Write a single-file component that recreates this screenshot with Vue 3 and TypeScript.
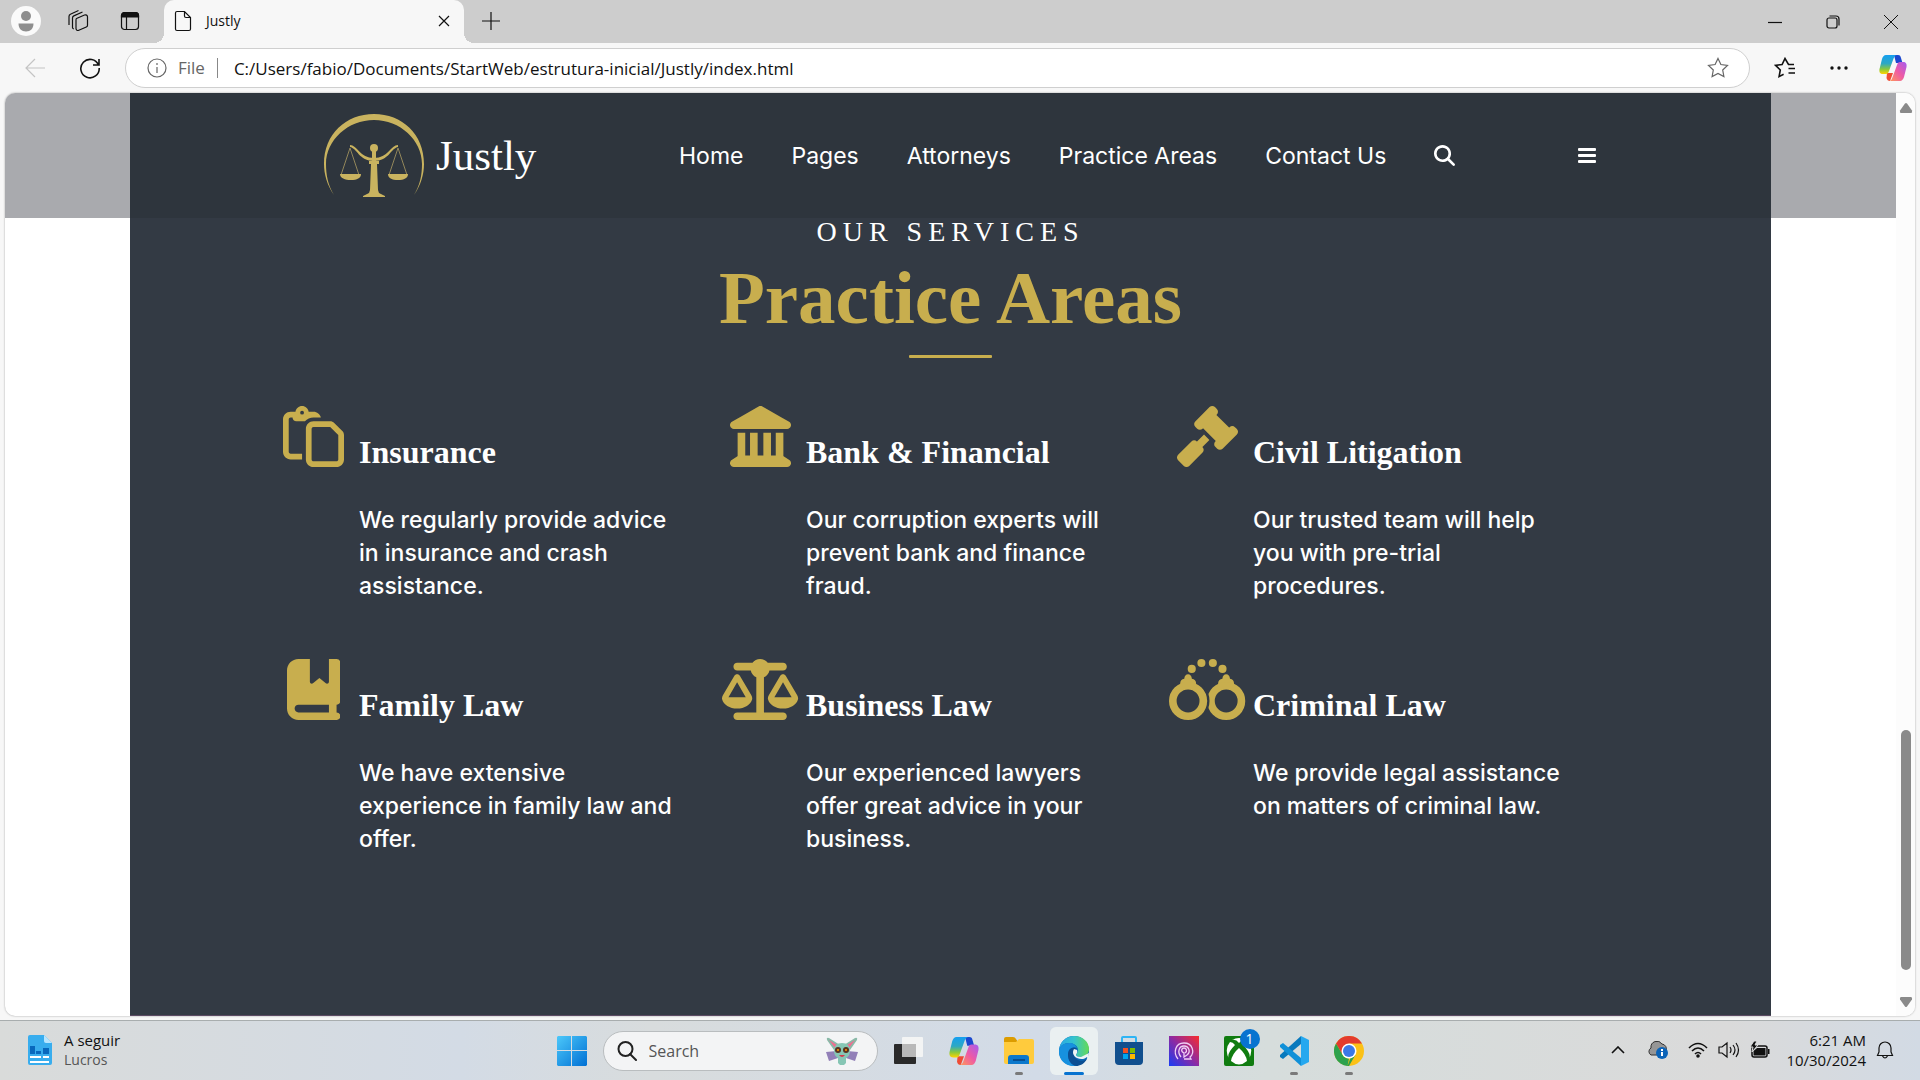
<script setup lang="ts">
import { ref } from 'vue'

interface Service {
  title: string
  text: string
  icon: 'paste' | 'bank' | 'gavel' | 'book' | 'scale' | 'cuffs'
}

const address = ref('C:/Users/fabio/Documents/StartWeb/estrutura-inicial/Justly/index.html')
const query = ref('')
const links: string[] = ['Home', 'Pages', 'Attorneys', 'Practice Areas', 'Contact Us']

const services: Service[] = [
  { title: 'Insurance', text: 'We regularly provide advice\nin insurance and crash\nassistance.', icon: 'paste' },
  { title: 'Bank & Financial', text: 'Our corruption experts will\nprevent bank and finance\nfraud.', icon: 'bank' },
  { title: 'Civil Litigation', text: 'Our trusted team will help\nyou with pre-trial\nprocedures.', icon: 'gavel' },
  { title: 'Family Law', text: 'We have extensive\nexperience in family law and\noffer.', icon: 'book' },
  { title: 'Business Law', text: 'Our experienced lawyers\noffer great advice in your\nbusiness.', icon: 'scale' },
  { title: 'Criminal Law', text: 'We provide legal assistance\non matters of criminal law.', icon: 'cuffs' },
]
</script>

<template>
  <div class="desktop">
    <header class="tabstrip">
      <div class="strip-left">
        <button class="strip-btn" aria-label="Profile">
          <svg width="30" height="30" viewBox="0 0 30 30"><circle cx="15" cy="15" r="15" fill="#fafafa" /><circle cx="15" cy="10" r="5" fill="#8e8e8e" /><path d="M7.500 17.500h15c0 5-3 8-7.500 8s-7.500-3-7.500-8z" fill="#8e8e8e" /></svg>
        </button>
        <button class="strip-btn" aria-label="Workspaces">
          <svg class="line" width="24" height="24" viewBox="0 0 24 24"><path d="M10.500 9.500 18.500 6c1.500-.6 3 .3 3 1.800v8.400c0 .8-.5 1.500-1.200 1.800l-7.500 3.300c-1.300.6-2.800-.3-2.800-1.800v-8.200c0-.8-.1-1.500.5-1.800z" /><path d="M6.500 18.500V9c0-1 .5-1.700 1.300-2.100L16.500 3M3 16V7.500c0-1 .5-1.900 1.400-2.300L12.500 1.500M6.500 18.500c0 1 .6 1.300 1.300 1.400" /></svg>
        </button>
        <button class="strip-btn" aria-label="Tab actions">
          <svg class="line" width="20" height="20" viewBox="0 0 20 20"><rect x="1.500" y="1.500" width="17" height="17" rx="3" /><path d="M1.500 6V4.500a3 3 0 0 1 3-3h11a3 3 0 0 1 3 3V6z" fill="#111" /><path d="M6.500 6v12.500" /></svg>
        </button>
      </div>
      <div class="tab">
        <svg class="line" width="18" height="22" viewBox="0 0 18 22"><path d="M3 1.500h7.500L16.500 7.500V19c0 .9-.6 1.500-1.500 1.500H3c-.9 0-1.500-.6-1.500-1.500V3c0-.9.600-1.500 1.500-1.500zM10.500 1.500V6c0 .9.600 1.500 1.500 1.500h4.500" /></svg>
        <span class="tab-title">Justly</span>
        <button aria-label="Close tab"><svg class="line" width="12" height="12" viewBox="0 0 12 12"><path d="M1 1l10 10M11 1L1 11" /></svg></button>
      </div>
      <button class="new-tab" aria-label="New tab"><svg class="line" width="18" height="18" viewBox="0 0 18 18"><path d="M9 0v18M0 9h18" /></svg></button>
      <div class="win-controls">
        <button aria-label="Minimize"><svg class="line" width="14" height="14" viewBox="0 0 14 14"><path d="M0 7.500h14" /></svg></button>
        <button aria-label="Restore"><svg class="line" width="14" height="14" viewBox="0 0 14 14"><rect x="1" y="3" width="10" height="10" rx="2" /><path d="M3.500 1H10a3 3 0 0 1 3 3v6.500" /></svg></button>
        <button aria-label="Close"><svg class="line thin" width="14" height="14" viewBox="0 0 14 14"><path d="M0 0l14 14M14 0L0 14" /></svg></button>
      </div>
    </header>

    <div class="toolbar">
      <button class="tool" aria-label="Back" disabled><svg class="line" width="20" height="20" viewBox="0 0 20 20"><path d="M20 10H1M10 1L1 10l9 9" stroke="#c4c4c4" /></svg></button>
      <button class="tool" aria-label="Refresh"><svg class="line bold" width="22" height="22" viewBox="0 0 22 22"><path d="M19.500 8A9.200 9.200 0 1 0 20.200 11M20 2v6h-6" /></svg></button>
      <div class="address">
        <svg class="line" width="20" height="20" viewBox="0 0 20 20"><g stroke="#666"><circle cx="10" cy="10" r="9" /><path d="M10 9v6M10 5v2" /></g></svg>
        <label class="scheme" for="address">File</label>
        <input id="address" v-model="address" type="text" spellcheck="false" />
        <button aria-label="Add to favorites"><svg class="line" width="22" height="22" viewBox="0 0 22 22"><path d="M11 1.500l2.900 6 6.600.9-4.800 4.600 1.200 6.600-5.900-3.100-5.900 3.100 1.200-6.600L1.500 8.400l6.600-.9z" stroke="#666" /></svg></button>
      </div>
      <div class="tools-right">
        <button aria-label="Favorites"><svg class="line bold" width="22" height="22" viewBox="0 0 22 22"><path d="M20 7.500h-5.500L11 1.500l-2.900 6-6.600.9 4.800 4.600-1.200 6.600 4.500-2.400M14.500 11.500H21M14.500 16H21" /></svg></button>
        <button aria-label="Settings and more"><svg width="18" height="6" viewBox="0 0 18 6" fill="#111"><circle cx="2" cy="3" r="1.700" /><circle cx="9" cy="3" r="1.700" /><circle cx="16" cy="3" r="1.700" /></svg></button>
        <button aria-label="Copilot"><svg width="28" height="28" viewBox="0 0 28 28"><use href="#copilot" /></svg></button>
      </div>
    </div>

    <div class="frame">
      <div class="page">
        <div class="navband">
          <div class="navbar">
            <a class="brand" href="#">
              <svg width="100" height="84" viewBox="0 0 100 84" fill="#c9b35f">
                <path d="M10 81C3 71 0 60 0 50 0 20 22 0 50 0s50 20 50 50c0 10-3 21-10 31 6-10 8-20 8-31C98 26 76 6 50 6S2 26 2 50c0 11 2 21 8 31z" />
                <circle cx="50" cy="34" r="4" />
                <path d="M48 37h4v10h3v3h-2l1 26 1 3 6 3v1H39v-1l6-3 1-3 1-26h-2v-3h3z" />
                <path d="M26 31c7 0 10 13 24 13s17-13 24-13v2c-7 1-9 14-24 14S33 34 26 33z" />
                <path d="M26 34l-9 27M26 34l9 27M74 34l-9 27M74 34l9 27" fill="none" stroke="#92865a" />
                <path d="M16 60h21c0 4-4 6-10 6s-11-2-11-6zM64 60h20c0 4-4 6-10 6s-10-2-10-6z" />
              </svg>
              <span>Justly</span>
            </a>
            <nav>
              <a v-for="link in links" :key="link" href="#">{{ link }}</a>
              <button aria-label="Search site"><svg width="21" height="21" viewBox="0 0 512 512" fill="#fff"><path d="M416 208c0 45.900-14.900 88.300-40 122.700L502.600 457.400c12.500 12.500 12.500 32.800 0 45.300s-32.800 12.500-45.300 0L330.700 376c-34.400 25.200-76.800 40-122.700 40C93.100 416 0 322.900 0 208S93.100 0 208 0S416 93.100 416 208zM208 352a144 144 0 1 0 0-288 144 144 0 1 0 0 288z" /></svg></button>
            </nav>
            <button class="menu" aria-label="Menu"><svg width="18" height="16" viewBox="0 0 18 16" fill="#fff"><rect width="18" height="3" rx="1" /><rect y="6" width="18" height="3" rx="1" /><rect y="12" width="18" height="3" rx="1" /></svg></button>
          </div>
        </div>

        <main class="services">
          <p class="eyebrow">OUR SERVICES</p>
          <h1>Practice Areas</h1>
          <hr />
          <div class="grid">
            <article v-for="s in services" :key="s.title">
              <div class="icon">
                <svg v-if="s.icon === 'paste'" height="61" viewBox="0 0 512 512"><path d="M104.600 48L64 48C28.700 48 0 76.700 0 112L0 384c0 35.300 28.700 64 64 64l96 0 0-48-96 0c-8.800 0-16-7.200-16-16l0-272c0-8.800 7.200-16 16-16l16 0c0 17.700 14.300 32 32 32l72.400 0C202 108.400 227.600 96 256 96l62 0c-7.100-27.600-32.200-48-62-48l-40.600 0C211.600 20.900 188.200 0 160 0s-51.600 20.900-55.400 48zM144 56a16 16 0 1 1 32 0 16 16 0 1 1 -32 0zM448 464l-192 0c-8.800 0-16-7.200-16-16l0-256c0-8.800 7.200-16 16-16l140.100 0L464 243.900 464 448c0 8.800-7.200 16-16 16zM256 512l192 0c35.300 0 64-28.700 64-64l0-204.100c0-12.700-5.100-24.900-14.100-33.900l-67.900-67.900c-9-9-21.200-14.100-33.900-14.100L256 128c-35.300 0-64 28.700-64 64l0 256c0 35.300 28.700 64 64 64z" /></svg>
                <svg v-else-if="s.icon === 'bank'" height="61" viewBox="0 0 512 512"><path d="M240.100 4.200c9.800-5.600 21.900-5.600 31.800 0l171.800 98.100L448 104l0 .9 47.900 27.400c12.600 7.200 18.800 22 15.100 36s-16.400 23.800-30.900 23.800L32 192c-14.500 0-27.200-9.800-30.900-23.800s2.500-28.800 15.100-36L64 104.900l0-.9 4.400-1.600L240.100 4.200zM64 224l64 0 0 192 40 0 0-192 64 0 0 192 48 0 0-192 64 0 0 192 40 0 0-192 64 0 0 196.300c.6 .3 1.200 .7 1.800 1.100l48 32c11.700 7.800 17 22.400 12.900 35.900S494.100 512 480 512L32 512c-14.100 0-26.500-9.200-30.600-22.700s1.100-28.100 12.900-35.900l48-32c.6-.4 1.200-.7 1.800-1.100L64 224z" /></svg>
                <svg v-else-if="s.icon === 'gavel'" height="61" viewBox="0 0 512 512"><path d="M318.600 9.400c-12.500-12.500-32.800-12.500-45.300 0l-120 120c-12.500 12.500-12.500 32.800 0 45.300l16 16c12.500 12.500 32.800 12.500 45.300 0l4-4L325.400 293.400l-4 4c-12.500 12.500-12.500 32.800 0 45.300l16 16c12.500 12.500 32.800 12.500 45.300 0l120-120c12.500-12.500 12.500-32.800 0-45.300l-16-16c-12.500-12.500-32.800-12.500-45.300 0l-4 4L330.600 74.600l4-4c12.500-12.500 12.500-32.800 0-45.300l-16-16zm-152 288c-12.500-12.500-32.800-12.500-45.300 0l-112 112c-12.500 12.500-12.500 32.800 0 45.300l48 48c12.500 12.500 32.800 12.500 45.300 0l112-112c12.500-12.500 12.500-32.800 0-45.300l-1.400-1.400L272 285.300 226.700 240 168 298.700l-1.400-1.400z" /></svg>
                <svg v-else-if="s.icon === 'book'" height="61" viewBox="0 0 448 512"><path d="M0 96C0 43 43 0 96 0l96 0 0 190.700c0 13.400 15.500 20.900 26 12.500L272 160l54 43.200c10.500 8.400 26 .9 26-12.500L352 0l32 0 32 0c17.700 0 32 14.300 32 32l0 320c0 17.700-14.300 32-32 32l0 64c17.700 0 32 14.300 32 32s-14.300 32-32 32l-32 0L96 512c-53 0-96-43-96-96L0 96zM64 416c0 17.700 14.300 32 32 32l256 0 0-64L96 384c-17.700 0-32 14.300-32 32z" /></svg>
                <svg v-else-if="s.icon === 'scale'" height="61" viewBox="0 0 640 512"><path d="M384 32l128 0c17.700 0 32 14.300 32 32s-14.300 32-32 32L398.400 96c-5.200 25.800-22.900 47.100-46.400 57.300L352 448l160 0c17.700 0 32 14.300 32 32s-14.300 32-32 32l-192 0-192 0c-17.700 0-32-14.300-32-32s14.300-32 32-32l160 0 0-294.700c-23.500-10.300-41.200-31.600-46.400-57.300L128 96c-17.700 0-32-14.300-32-32s14.300-32 32-32l128 0c14.600-19.400 37.800-32 64-32s49.400 12.600 64 32zm55.600 288l144.900 0L512 195.800 439.600 320zM512 416c-62.900 0-115.200-34-126-78.900c-2.600-11 1-22.300 6.700-32.100l95.200-163.200c5-8.600 14.200-13.800 24.100-13.800s19.100 5.300 24.100 13.800l95.200 163.200c5.700 9.800 9.300 21.100 6.700 32.100C627.200 382 574.900 416 512 416zM126.800 195.800L54.400 320l144.900 0L126.800 195.800zM.9 337.100c-2.600-11 1-22.300 6.700-32.100l95.200-163.200c5-8.600 14.200-13.800 24.100-13.800s19.100 5.300 24.100 13.800l95.200 163.200c5.700 9.800 9.300 21.100 6.700 32.100C242 382 189.700 416 126.800 416S11.700 382 .9 337.100z" /></svg>
                <svg v-else height="61" viewBox="0 0 640 512">
                  <circle cx="272" cy="34" r="34" /><circle cx="368" cy="34" r="34" /><circle cx="191" cy="83" r="34" /><circle cx="449" cy="83" r="34" />
                  <path d="M412 208c0-24 14-38 36-42 2-24 14-38 32-38s30 14 32 38c22 4 34 18 34 42l-20 40h-94z" />
                  <circle cx="480" cy="352" r="128" fill="none" stroke="#c8ae4e" stroke-width="64" />
                  <circle cx="160" cy="352" r="170" fill="none" stroke="#333a44" stroke-width="20" />
                  <path d="M94 208c0-24 12-38 34-42 2-24 14-38 32-38s30 14 32 38c22 4 36 18 36 42l-20 40h-94z" />
                  <circle cx="160" cy="352" r="128" fill="none" stroke="#c8ae4e" stroke-width="64" />
                </svg>
              </div>
              <div class="copy">
                <h3>{{ s.title }}</h3>
                <p>{{ s.text }}</p>
              </div>
            </article>
          </div>
        </main>
      </div>
      <div class="scrollbar">
        <svg width="14" height="12" viewBox="0 0 14 12" fill="#8a8a8a"><path d="M6 1.500q1-1 2 0l5 7q.6 2.500-1 2.500H2q-1.600 0-1-2.500z" /></svg>
        <div class="track"><div class="thumb"></div></div>
        <svg width="14" height="12" viewBox="0 0 14 12" fill="#8a8a8a"><path d="M6 10.500q1 1 2 0l5-7q.6-2.500-1-2.500H2Q.4 1 1 3.500z" /></svg>
      </div>
    </div>

    <footer class="taskbar">
      <button class="widgets">
        <svg width="24" height="30" viewBox="0 0 24 30"><path d="M2 0h14l8 8v20a2 2 0 0 1-2 2H2a2 2 0 0 1-2-2V2a2 2 0 0 1 2-2z" fill="#38adee" /><path d="M16 0l8 8h-6a2 2 0 0 1-2-2z" fill="#b7e5ff" /><path d="M2 11h5v8H2zM8 16h5v3H8zM15 13h6v6h-6z" fill="#0868bd" /><path d="M2 21h11v2H2zM15 21h6v2h-6zM2 26h19v2H2z" fill="#fff" /></svg>
        <span><strong>A seguir</strong><small>Lucros</small></span>
      </button>

      <div class="apps">
        <button class="app" aria-label="Start"><svg width="30" height="30" viewBox="0 0 30 30"><defs><linearGradient id="win" x2="1" y2="1"><stop stop-color="#4cc8fa" /><stop offset="1" stop-color="#0070d4" /></linearGradient></defs><path d="M1 0h13v14H0V1zM15 0h14l1 1v13H15zM0 15h14v15H1l-1-1zM15 15h15v14l-1 1H15z" fill="url(#win)" /></svg></button>
        <label class="search">
          <svg width="20" height="20" viewBox="0 0 20 20" fill="none" stroke="#222" stroke-width="2"><circle cx="8.500" cy="8" r="7" /><path d="M13 13l6 6" stroke-linecap="round" /></svg>
          <input v-model="query" type="text" placeholder="Search" aria-label="Search" />
          <svg width="34" height="28" viewBox="0 0 34 28"><path d="M12 14L1 15l3 9 9-3zM22 14l11 1-3 9-9-3z" fill="#9280b8" /><path d="M9 13L2 3q-1-3 2-2l11 7zM25 13l7-10q1-3-2-2l-11 7z" fill="#8ab9a8" /><path d="M10 11L4 3l8 5zM24 11l6-8-8 5z" fill="#ef6d8f" /><path d="M17 6q8 0 8 8 0 5-4 7v5l-2 2h-4l-2-2v-5q-4-2-4-7 0-8 8-8z" fill="#86c6b4" /><circle cx="13" cy="13" r="3" fill="#57311f" /><circle cx="21" cy="13" r="3" fill="#57311f" /><circle cx="13" cy="13" r="1" fill="#f90" /><circle cx="21" cy="13" r="1" fill="#f90" /><path d="M14 18q3 4 6 0z" fill="#d43b4c" /></svg>
        </label>
        <button class="app" aria-label="Task view"><svg width="30" height="30" viewBox="0 0 30 30"><rect y="8" width="22" height="20" rx="1" fill="#2a2a2a" /><rect x="8" y="1" width="21" height="20" rx="1" fill="#f5f5f5" fill-opacity=".93" /><path d="M8 8h14v13H9l-1-1z" fill="#b9b9b9" /></svg></button>
        <button class="app" aria-label="Copilot app">
          <svg width="30" height="30" viewBox="0 0 28 28">
            <defs>
              <linearGradient id="cpA" x2="0" y2="1"><stop stop-color="#159ff0" /><stop offset=".45" stop-color="#2da8c4" /><stop offset=".75" stop-color="#8cc93a" /><stop offset="1" stop-color="#ffd400" /></linearGradient>
              <linearGradient id="cpB" x1="1" x2="0" y2="1"><stop stop-color="#a55cf0" /><stop offset=".5" stop-color="#ee5aa5" /><stop offset="1" stop-color="#ff9a57" /></linearGradient>
              <g id="copilot">
                <path d="M15 1h4c2 0 2.500 1 3 3l1.500 5H17z" fill="#1b48cf" />
                <path d="M8 19h6l-3 8c-2 0-3-1-3.500-3z" fill="#ef4c35" />
                <path d="M7 1h11c-2 0-3 2-4 5l-4 11c-.6 2-1.500 3-3 3H4c-3 0-4-2-3.500-5L3 5c.6-2 2-4 4-4z" fill="url(#cpA)" />
                <path d="M21 27H10c2 0 3-2 4-5l4-11c.6-2 1.500-3 3-3h3c3 0 4 2 3.500 5L25 23c-.6 2-2 4-4 4z" fill="url(#cpB)" />
              </g>
            </defs>
            <use href="#copilot" />
          </svg>
        </button>
        <button class="app open" aria-label="File Explorer"><svg width="30" height="30" viewBox="0 0 30 30"><path d="M0 3q0-2 2-2h7q2 0 3 2l2 3H0z" fill="#dc9c00" /><path d="M0 6h12l3-3h13q2 0 2 2v21q0 2-2 2H2q-2 0-2-2z" fill="#ffcb3d" /><path d="M4 28v-6q0-3 3-3h15q3 0 3 3v6z" fill="#0c78cc" /><path d="M9 23h12v2H9z" fill="#074e91" /></svg></button>
        <button class="app active" aria-label="Microsoft Edge"><svg width="30" height="30" viewBox="0 0 30 30"><defs><linearGradient id="eg" x2="1"><stop stop-color="#2aa8e6" /><stop offset=".5" stop-color="#34c3ce" /><stop offset="1" stop-color="#65da55" /></linearGradient></defs><circle cx="15" cy="15" r="15" fill="#0b67b5" /><path d="M0 14C1 5 8 0 15 0c9 0 15 6 15 13 0 5-4 8-8 8-3 0-5-1-5-2s2-2 2-5c0-4-4-7-9-7C5 7 1 10 0 14z" fill="url(#eg)" /><path d="M0 14c1-4 5-7 10-7 4 0 7 2 8 5-5-2-9 1-9 7 0 5 3 9 8 11C7 31-1 24 0 14z" fill="#1791df" /><path d="M18 12c-4 2-5 9 1 12 4 2 7 0 9-1-3 5-7 7-11 7-5-1-8-6-8-11 0-6 4-9 9-7z" fill="#0c4f93" /><path d="M15 13c-2 3-1 7 3 9 4 2 8 1 10-1l1 2 1-6-8 4c-3 0-5-1-5-2s2-2 1-5z" fill="#edf4f6" /></svg></button>
        <button class="app" aria-label="Microsoft Store"><svg width="30" height="30" viewBox="0 0 30 30"><path d="M8 7V2q0-1 1-1h12q1 0 1 1v5" fill="none" stroke="#2eb4f4" stroke-width="2" /><path d="M1 6h28v19q0 4-4 4H5q-4 0-4-4z" fill="#114f8e" /><path d="M9 12h5v5H9z" fill="#f25022" /><path d="M16 12h5v5h-5z" fill="#7fba00" /><path d="M9 18h5v5H9z" fill="#00a4ef" /><path d="M16 18h5v5h-5z" fill="#ffb900" /></svg></button>
        <button class="app" aria-label="Design app"><svg width="30" height="30" viewBox="0 0 30 30"><defs><linearGradient id="pr" x1="0" y1="1" x2="1" y2="0"><stop stop-color="#183bf5" /><stop offset=".5" stop-color="#8c2aa3" /><stop offset="1" stop-color="#f92c2c" /></linearGradient></defs><path d="M0 0h30v30H0z" fill="url(#pr)" /><path d="M9 23c-5-6-3-16 6-16s11 10 6 14l1 2h-7M12 21c-4-5-2-11 3-11s7 6 3 9l-3 2v-4c-4-2-2-5 0-5s4 3 1 5" fill="none" stroke="#f1cff5" stroke-width="1.300" /></svg></button>
        <button class="app" aria-label="Xbox"><svg width="30" height="30" viewBox="0 0 30 30"><rect width="30" height="30" rx="2" fill="#107c10" /><path d="M8 4q7-4 14 0-4-1-7 3-3-4-7-3zM11 9Q2 18 5 23 0 13 6 6q3 0 5 3zM19 9q9 9 6 14 5-10-1-17-3 0-5 3zM15 12q7 6 8 13-8 7-16 0 1-7 8-13z" fill="#fff" /></svg><span class="badge">1</span></button>
        <button class="app open" aria-label="Visual Studio Code"><svg width="30" height="30" viewBox="0 0 30 30"><path d="M22 0l8 4v22l-8 4z" fill="#25a8ef" /><path d="M22 0v8L4 23l-3-2v-2z" fill="#0879bd" /><path d="M22 30v-8L4 7 1 9v2z" fill="#1090d8" /></svg></button>
        <button class="app open" aria-label="Chrome"><svg width="30" height="30" viewBox="0 0 30 30"><circle cx="15" cy="15" r="15" fill="#fbc116" /><path d="M2 7.500A15 15 0 0 1 28 7.500H15L8.500 18.700z" fill="#e33b2e" /><path d="M2 7.500l6.500 11.200A7.500 7.500 0 0 0 15 22.500L13.500 30A15 15 0 0 1 2 7.500zM21.500 18.700L15 30h-1.500l3-8z" fill="#2da14c" /><circle cx="15" cy="15" r="7.500" fill="#fff" /><circle cx="15" cy="15" r="6" fill="#3b78e7" /></svg></button>
      </div>

      <div class="tray">
        <svg class="line bold" width="14" height="8" viewBox="0 0 14 8"><path d="M1 7l6-6 6 6" /></svg>
        <svg class="cloud" width="20" height="18" viewBox="0 0 20 18"><path d="M3 14a4 4 0 0 1 0-7 6 6 0 0 1 11-4 5 5 0 0 1 4 7v4z" fill="#969696" stroke="#333" /><circle cx="14" cy="12" r="6" fill="#0b63b8" /><path d="M14 11v4M14 8v2" stroke="#fff" stroke-width="2" /></svg>
        <svg class="line bold" width="20" height="16" viewBox="0 0 20 16"><path d="M1 6q9-9 18 0M4 9q6-6 12 0M7 12q3-3 6 0" /><circle cx="10" cy="14" r="1" fill="#111" /></svg>
        <svg class="line" width="22" height="18" viewBox="0 0 22 18"><path d="M1 6h3l5-4v14l-5-4H1zM12 6q2 3 0 6M15 4q4 5 0 10M18 2q5 7 0 14" /></svg>
        <svg width="20" height="18" viewBox="0 0 20 18"><rect x="2" y="5" width="15" height="11" rx="2" fill="none" stroke="#111" stroke-width="1.500" /><path d="M7 7h8.500v7.500h-12V10zM18 8h1.500v5H18z" fill="#111" /><path d="M4 0L0 6h3L2 11l6-7H5l2-4z" fill="#111" stroke="#dcdcdc" /></svg>
        <div class="clock"><span>6:21 AM</span><span>10/30/2024</span></div>
        <svg class="line" width="18" height="20" viewBox="0 0 18 20"><path d="M1.500 15.500h15L15 12V8A6 6 0 0 0 3 8v4zM6.500 16q2.500 4 5 0" /></svg>
      </div>
    </footer>
  </div>
</template>

<style>
body {
  margin: 0;
}
</style>

<style scoped>
.desktop {
  min-height: 100vh;
  display: flex;
  flex-direction: column;
  background: #f7f7f7;
  font-family: 'Open Sans', 'Noto Sans', sans-serif;
  color: #111;
}
button {
  display: flex;
  align-items: center;
  justify-content: center;
  padding: 0;
  border: 0;
  background: none;
  color: inherit;
  font: inherit;
}
input {
  min-width: 0;
  flex: 1;
  padding: 0;
  border: 0;
  outline: 0;
  background: none;
  color: inherit;
  font: inherit;
}
a {
  color: inherit;
  text-decoration: none;
}
svg {
  flex: none;
}
.line {
  fill: none;
  stroke: #111;
  stroke-width: 1.2;
}
.bold {
  stroke-width: 1.6;
}
.thin {
  stroke-width: 1;
}

/* tab strip */
.tabstrip {
  display: flex;
  height: 43px;
  background: #cdcdcd;
}
.strip-left {
  display: flex;
  align-items: center;
  width: 164px;
  padding-bottom: 2px;
  box-sizing: border-box;
}
.strip-btn {
  width: 52px;
}
.tab {
  position: relative;
  display: flex;
  align-items: center;
  gap: 14px;
  width: 300px;
  box-sizing: border-box;
  padding: 0 14px 2px 10px;
  border-radius: 10px 10px 0 0;
  background: #f7f7f7;
}
.tab::before,
.tab::after {
  content: '';
  position: absolute;
  bottom: 0;
  width: 10px;
  height: 10px;
}
.tab::before {
  right: 100%;
  background: radial-gradient(circle at 0 0, #cdcdcd 10px, #f7f7f7 10px);
}
.tab::after {
  left: 100%;
  background: radial-gradient(circle at 100% 0, #cdcdcd 10px, #f7f7f7 10px);
}
.tab-title {
  flex: 1;
  font-size: 14px;
}
.new-tab {
  width: 54px;
  padding-bottom: 2px;
}
.win-controls {
  display: flex;
  margin-left: auto;
}
.win-controls button {
  width: 58px;
}

/* toolbar */
.toolbar {
  display: flex;
  align-items: center;
  height: 50px;
  padding-left: 7px;
}
.tool {
  width: 55px;
}
.address {
  flex: 1;
  display: flex;
  align-items: center;
  height: 38px;
  padding: 0 20px 0 21px;
  border: 1px solid #cfcfcf;
  border-radius: 20px;
  background: #fff;
  margin-left: 8px;
  font-size: 17px;
}
.scheme {
  margin: 0 16px 0 11px;
  padding-right: 12px;
  border-right: 1px solid #888;
  line-height: 20px;
  color: #666;
}
.tools-right {
  display: flex;
  width: 170px;
}
.tools-right button {
  width: 54px;
  height: 40px;
}
.tools-right button:first-child {
  margin-left: 8px;
}

/* page frame */
.frame {
  flex: 1;
  display: flex;
  margin: 0 5px 4px;
  border-radius: 10px;
  overflow: hidden;
  background: #fff;
  box-shadow: 0 0 2px #999;
}
.page {
  flex: 1;
  display: flex;
  flex-direction: column;
}
.scrollbar {
  display: flex;
  flex-direction: column;
  align-items: center;
  width: 19px;
  padding: 9px 0 8px;
  box-sizing: border-box;
  background: #fcfcfc;
}
.track {
  flex: 1;
  display: flex;
  flex-direction: column;
  justify-content: flex-end;
  padding-bottom: 26px;
}
.thumb {
  width: 10px;
  height: 28%;
  border-radius: 5px;
  background: #8a8a8a;
}

/* site header */
.navband {
  padding: 0 125px;
  background: #a9aaae;
}
.navbar {
  display: flex;
  align-items: center;
  height: 125px;
  padding: 0 175px 0 194px;
  background: #2e353d;
  color: #fff;
}
.brand {
  display: flex;
  align-items: center;
  gap: 12px;
  width: 355px;
  font-family: 'Liberation Serif', serif;
  font-size: 43px;
}
nav {
  display: flex;
  align-items: center;
  gap: 48px;
  font-family: Inter, sans-serif;
  font-size: 23px;
}
.menu {
  margin-left: auto;
}

/* services */
.services {
  flex: 1;
  margin: 0 125px;
  background: #333a44;
  border-bottom: 1px solid #5b4a63;
  color: #fff;
  text-align: center;
}
.eyebrow {
  margin: 0;
  font-family: 'Liberation Serif', serif;
  font-size: 28px;
  line-height: 28px;
  letter-spacing: 6px;
}
h1 {
  margin: 12px 0 0;
  font-family: 'Liberation Serif', serif;
  font-size: 75px;
  line-height: 80px;
  color: #c8ae4e;
}
hr {
  width: 83px;
  height: 3px;
  margin: 17px auto 48px;
  border: 0;
  border-radius: 1px;
  background: #c8ae4e;
}
.grid {
  display: grid;
  grid-template-columns: repeat(3, 1fr);
  row-gap: 56px;
  padding: 0 162px 0 138px;
  text-align: left;
}
article {
  display: flex;
}
.icon {
  width: 91px;
  flex: none;
  display: flex;
  justify-content: center;
  align-items: flex-start;
}
.icon svg {
  fill: #c8ae4e;
}
.copy {
  flex: 1;
  padding-top: 26px;
}
h3 {
  margin: 0 0 32px;
  font-family: 'Liberation Serif', serif;
  font-size: 32px;
  line-height: 40px;
}
article p {
  margin: 0;
  font-family: Inter, sans-serif;
  font-size: 23px;
  font-weight: 500;
  line-height: 33px;
  white-space: pre;
}

/* taskbar */
.taskbar {
  display: grid;
  grid-template-columns: 1fr auto 1fr;
  align-items: center;
  height: 59px;
  border-top: 1px solid #a8adae;
  background: linear-gradient(90deg, #d9dbda, #d3dbe5 24%, #d8dcdd 34%, #d2dbe7 54%, #d6dddc 66%, #dadada 90%, #d2dae4);
}
.widgets {
  justify-self: start;
  gap: 12px;
  padding: 0 0 2px 28px;
  text-align: left;
}
.widgets span {
  display: flex;
  flex-direction: column;
}
.widgets strong,
.widgets small {
  font-size: 15px;
  font-weight: 400;
  line-height: 20px;
}
.widgets small {
  font-size: 14px;
  color: #555;
}
.apps {
  display: flex;
  align-items: center;
  gap: 7px;
}
.app {
  position: relative;
  width: 48px;
  height: 48px;
  border-radius: 6px;
}
.search {
  display: flex;
  align-items: center;
  gap: 12px;
  width: 242px;
  height: 38px;
  padding: 0 18px 0 13px;
  border: 1px solid #b9bdbf;
  border-radius: 20px;
  background: #f3f4f5;
  font-size: 16px;
}
.search input::placeholder {
  color: #555;
  opacity: 1;
}
.active {
  background: #eaf0f1;
}
.open::after,
.active::after {
  content: '';
  position: absolute;
  bottom: 0;
  width: 8px;
  height: 3px;
  border-radius: 2px;
  background: #7a7a7a;
}
.active::after {
  width: 20px;
  background: #0873d0;
}
.badge {
  position: absolute;
  top: 2px;
  right: 3px;
  width: 20px;
  border-radius: 10px;
  background: #0873d0;
  color: #fff;
  font-size: 14px;
  line-height: 20px;
}
.tray {
  display: flex;
  align-items: center;
  justify-content: flex-end;
  gap: 10px;
  padding: 0 26px 2px 0;
}
.cloud {
  margin: 0 10px 0 13px;
}
.clock {
  display: flex;
  flex-direction: column;
  margin-left: 6px;
  font-size: 15px;
  line-height: 20px;
  text-align: right;
}
</style>
